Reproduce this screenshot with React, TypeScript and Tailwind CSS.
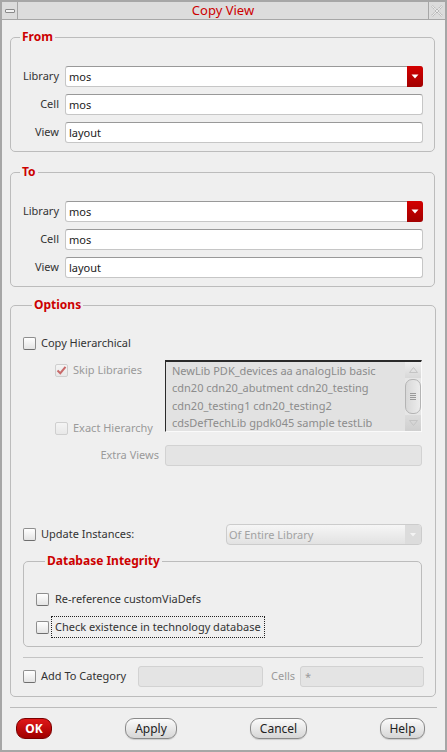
import React from "react";

const red = "text-[#cc0000]";

const Check = ({ checked = false, disabled = false }: { checked?: boolean; disabled?: boolean }) => (
  <span
    className={`w-[13px] h-[13px] shrink-0 rounded-[2px] border flex items-center justify-center ${
      disabled
        ? "border-[#cfcfcf] bg-linear-to-b from-[#f4f4f4] to-[#e8e8e8]"
        : "border-[#8e8e8e] border-b-[#6e6e6e] bg-linear-to-b from-white to-[#e4e4e4]"
    }`}
  >
    {checked && (
      <svg width="11" height="10" viewBox="0 0 11 10">
        <path d="M1.5 5.5 L4.3 8.2 L9.5 1.8" fill="none" stroke="#c86a6a" strokeWidth="2" />
      </svg>
    )}
  </span>
);

const Legend = ({ children }: { children: React.ReactNode }) => (
  <legend className={`ml-[9px] px-[2px] text-[12px] leading-[14px] font-bold ${red}`}>{children}</legend>
);

const Field = ({ label, value, combo }: { label: string; value: string; combo?: boolean }) => (
  <div className="flex items-center h-[21px]">
    <span className="w-[48px] text-right text-[#333]">{label}</span>
    <div className="ml-[6px] flex-1 h-full flex bg-white border border-[#c6c6c6] border-t-[#999] rounded-[3px]">
      <span className="flex-1 pl-[3px] leading-[19px] text-[#222]">{value}</span>
      {combo && (
        <span className="w-[16px] -my-px -mr-px rounded-r-[3px] bg-linear-to-b from-[#d40000] to-[#a20000] flex items-center justify-center">
          <svg width="8" height="5" viewBox="0 0 8 5">
            <path d="M0.5 0.5 H7.5 L4 4.5 Z" fill="#fff" />
          </svg>
        </span>
      )}
    </div>
  </div>
);

const ViewGroup = ({ title, top }: { title: string; top: string }) => (
  <fieldset className={`${top} border border-[#bcbcbc] rounded-[5px] pr-[11px] pt-[22px] pb-[8px] flex flex-col gap-[7px]`}>
    <Legend>{title}</Legend>
    <Field label="Library" value="mos" combo />
    <Field label="Cell" value="mos" />
    <Field label="View" value="layout" />
  </fieldset>
);

const Btn = ({ label, w, ok }: { label: string; w: string; ok?: boolean }) => (
  <button
    className={`${w} h-[21px] rounded-[9px] border text-[12px] leading-[19px] ${
      ok
        ? "border-[#7a0000] bg-linear-to-b from-[#e01818] to-[#a00000] text-white font-bold"
        : "border-[#8a8a8a] bg-linear-to-b from-[#fbfbfb] to-[#d6d6d6] text-[#222] shadow-[0_1px_1px_rgba(0,0,0,0.15)]"
    }`}
  >
    {label}
  </button>
);

export default function App() {
  return (
    <div className="w-[447px] h-[752px] border-2 border-[#a6a6a6] bg-[#efefef] flex flex-col font-['Noto_Sans','DejaVu_Sans',sans-serif] text-[11px] text-[#333]">
      {/* title bar */}
      <div className="h-[18px] flex border-b border-[#a6a6a6] bg-[#dcdcdc]">
        <div className="w-[16px] border-r border-[#a6a6a6] flex items-center justify-center">
          <span className="w-[10px] h-[4px] rounded-[1px] border border-[#8a8a8a] bg-[#f2f2f2]" />
        </div>
        <div className={`flex-1 text-center text-[13px] leading-[17px] ${red}`}>Copy View</div>
        <div className="w-[17px] border-l border-[#a6a6a6] flex items-center justify-center">
          <svg width="12" height="12" viewBox="0 0 12 12">
            <path d="M1 1 L11 11 M11 1 L1 11" stroke="#b4b4b4" strokeWidth="2.2" strokeDasharray="1.5 1" fill="none" />
            <path d="M1 1 L11 11 M11 1 L1 11" stroke="#f4f4f4" strokeWidth="0.8" fill="none" />
          </svg>
        </div>
      </div>

      <div className="pl-[8px] pr-[10px] flex flex-col">
        <ViewGroup title="From" top="mt-[10px]" />
        <ViewGroup title="To" top="mt-[13px]" />

        {/* options */}
        <fieldset className="mt-[11px] border border-[#bcbcbc] rounded-[5px] pl-[12px] pr-[11px] pb-[9px] flex flex-col">
          <Legend>Options</Legend>
          <label className="mt-[23px] h-[16px] flex items-center gap-[5px]">
            <Check />
            <span className="text-[#333]">Copy Hierarchical</span>
          </label>

          <div className="mt-[9px] flex">
            <div className="w-[142px] h-[76px] pl-[32px] flex flex-col justify-between">
              <div className="mt-[2px] h-[16px] flex items-center gap-[5px]">
                <Check checked disabled />
                <span className="text-[#9a9a9a]">Skip Libraries</span>
              </div>
              <div className="h-[16px] flex items-center gap-[5px]">
                <Check disabled />
                <span className="text-[#9a9a9a]">Exact Hierarchy</span>
              </div>
            </div>
            <div className="w-[257px] h-[72px] flex bg-[#e2e2e2] border border-[#2a2a2a] border-r-[#fafafa] border-b-[#fafafa] border-t-2">
              <div className="flex-1 pl-[6px] text-[#8c8c8c] leading-[17.3px] pt-[0px]">
                <div>NewLib PDK_devices aa analogLib basic</div>
                <div>cdn20 cdn20_abutment cdn20_testing</div>
                <div>cdn20_testing1 cdn20_testing2</div>
                <div>cdsDefTechLib gpdk045 sample testLib</div>
              </div>
              <div className="w-[16px] flex flex-col bg-[#e6e6e6]">
                <div className="h-[16px] flex items-center justify-center bg-linear-to-b from-[#eeeeee] to-[#d8d8d8]">
                  <svg width="9" height="6" viewBox="0 0 9 6"><path d="M0.5 5.5 L4.5 0.5 L8.5 5.5 Z" fill="none" stroke="#c4c4c4" /></svg>
                </div>
                <div className="flex-1 my-[1px] rounded-[7px] border border-[#b4b4b4] bg-linear-to-r from-[#d8d8d8] to-[#ececec] flex flex-col items-center justify-center gap-[1px]">
                  <span className="w-[6px] h-px bg-[#9a9a9a]" />
                  <span className="w-[6px] h-px bg-[#9a9a9a]" />
                  <span className="w-[6px] h-px bg-[#9a9a9a]" />
                  <span className="w-[6px] h-px bg-[#9a9a9a]" />
                </div>
                <div className="h-[16px] flex items-center justify-center bg-linear-to-b from-[#dcdcdc] to-[#cfcfcf]">
                  <svg width="9" height="6" viewBox="0 0 9 6"><path d="M0.5 0.5 L4.5 5.5 L8.5 0.5 Z" fill="none" stroke="#c4c4c4" /></svg>
                </div>
              </div>
            </div>
          </div>

          <div className="mt-[9px] flex items-center h-[21px]">
            <span className="w-[136px] text-right text-[#9a9a9a]">Extra Views</span>
            <div className="ml-[6px] w-[257px] h-full bg-[#e4e4e4] border border-[#d2d2d2] rounded-[3px]" />
          </div>

          <div className="mt-[58px] flex items-center h-[21px]">
            <label className="w-[203px] flex items-center gap-[5px]">
              <Check />
              <span>Update Instances:</span>
            </label>
            <div className="w-[196px] h-full flex rounded-[4px] border border-[#cccccc] bg-linear-to-b from-[#f6f6f6] to-[#e2e2e2]">
              <span className="flex-1 pl-[2px] leading-[19px] text-[#a2a2a2]">Of Entire Library</span>
              <span className="w-[16px] bg-[#dcdcdc] rounded-r-[3px] flex items-center justify-center">
                <svg width="6" height="4" viewBox="0 0 6 4"><path d="M0 0 H6 L3 3.5 Z" fill="#f4f4f4" /></svg>
              </span>
            </div>
          </div>

          <fieldset className="mt-[9px] w-[399px] border border-[#bcbcbc] rounded-[5px] pl-[12px] pb-[8px] flex flex-col gap-[6px]">
            <Legend>Database Integrity</Legend>
            <label className="mt-[20px] h-[22px] flex items-center gap-[5px]">
              <Check />
              <span className="px-px">Re-reference customViaDefs</span>
            </label>
            <label className="h-[22px] flex items-center gap-[2px]">
              <Check />
              <span className="h-[22px] px-[3px] leading-[20px] border border-dotted border-[#222]">Check existence in technology database</span>
            </label>
          </fieldset>

          <div className="mt-[10px] w-[400px] h-px bg-[#c4c4c4]" />

          <div className="mt-[8px] flex items-center h-[21px]">
            <label className="w-[115px] flex items-center gap-[5px]">
              <Check />
              <span>Add To Category</span>
            </label>
            <div className="w-[125px] h-full bg-[#e4e4e4] border border-[#d2d2d2] rounded-[3px]" />
            <span className="ml-[8px] w-[29px] text-[#9a9a9a]">Cells</span>
            <div className="w-[124px] h-full bg-[#e4e4e4] border border-[#d2d2d2] rounded-[3px] pl-[4px] leading-[19px] text-[#9a9a9a]">*</div>
          </div>
        </fieldset>
      </div>

      <div className="mt-[10px] mx-[8px] h-px bg-[#bcbcbc]" />

      <div className="mt-[10px] flex items-center pl-[14px]">
        <Btn label="OK" w="w-[36px]" ok />
        <span className="ml-[73px]"><Btn label="Apply" w="w-[52px]" /></span>
        <span className="ml-[73px]"><Btn label="Cancel" w="w-[57px]" /></span>
        <span className="ml-[73px]"><Btn label="Help" w="w-[45px]" /></span>
      </div>
    </div>
  );
}
